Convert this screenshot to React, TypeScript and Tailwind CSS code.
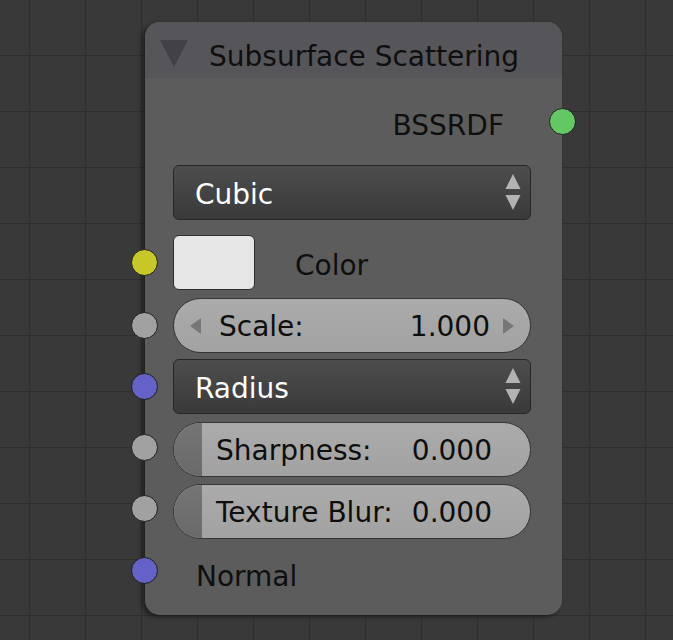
import React from "react"

const font = { fontFamily: '"DejaVu Sans", "Liberation Sans", sans-serif' }

const Socket = ({ color, className }: { color: string; className: string }) => (
  <div
    className={`absolute h-[27px] w-[27px] rounded-full border border-[#1e1e1e] ${color} ${className}`}
  />
)

const UpDown = () => (
  <svg width="16" height="37" viewBox="0 0 16 37" className="shrink-0">
    <polygon points="8,0 15.5,15 0.5,15" fill="#b3b3b3" />
    <polygon points="0.5,21 15.5,21 8,36" fill="#b3b3b3" />
  </svg>
)

const Dropdown = ({ label }: { label: string }) => (
  <div className="flex h-[55px] items-center justify-between rounded-[6px] border border-[#262626] bg-gradient-to-b from-[#4d4d4d] to-[#3a3a3a] pl-[21px] pr-[9px] text-white">
    <span className="pt-[5px]">{label}</span>
    <UpDown />
  </div>
)

const Slider = ({ label, value }: { label: string; value: string }) => (
  <div className="relative flex h-[55px] overflow-hidden rounded-full border border-[#353535] bg-gradient-to-b from-[#ababab] to-[#a2a2a2] text-[#0e0e0e]">
    <div className="w-[28px] shrink-0 bg-gradient-to-b from-[#757575] to-[#6a6a6a]" />
    <div className="flex flex-1 items-center justify-between pl-[14px] pr-[38px] pt-[3px]">
      <span>{label}</span>
      <span>{value}</span>
    </div>
  </div>
)

export default function App() {
  return (
    <div
      className="relative h-[640px] w-[673px] overflow-hidden bg-[#393939] bg-[linear-gradient(to_right,#2e2e2e_1px,transparent_1px),linear-gradient(to_bottom,#2e2e2e_1px,transparent_1px)] bg-[size:56px_56px] bg-[position:29px_55px]"
      style={font}
    >
      <div className="absolute left-[145px] top-[22px] w-[417px] text-[28px] leading-none">
        <div className="relative rounded-[15px] bg-[#5e5e5e]/95 shadow-[-3px_2px_4px_rgba(0,0,0,0.45)]">
          {/* header */}
          <div className="flex h-[56px] items-center gap-[21px] rounded-t-[15px] bg-[#56555a] pl-[15px] pt-[8px] text-[#0f0f0f]">
            <svg width="28" height="28" viewBox="0 0 28 28">
              <polygon points="0,0 28,0 14,27" fill="#424246" />
            </svg>
            <span className="pt-[5px]">Subsurface Scattering</span>
          </div>

          <div className="px-[28px] pb-[18px] pr-[31px]">
            {/* output */}
            <div className="relative mt-[27px] flex h-[40px] items-center justify-end pr-[27px] text-[#0f0f0f]">
              <span className="pt-[2px]">BSSRDF</span>
              <Socket color="bg-[#63c763]" className="right-[-45px] top-[3px]" />
            </div>

            <div className="mt-[20px]">
              <Dropdown label="Cubic" />
            </div>

            <div className="relative mt-[15px] flex h-[55px] items-center gap-[40px]">
              <Socket color="bg-[#c7c729]" className="left-[-42px] top-[14px]" />
              <div className="h-[55px] w-[82px] rounded-[6px] border border-[#2e2e2e] bg-[#e6e6e6]" />
              <span className="pt-[6px] text-[#0f0f0f]">Color</span>
            </div>

            <div className="relative mt-[8px]">
              <Socket color="bg-[#a1a1a1]" className="left-[-42px] top-[14px]" />
              <div className="flex h-[55px] items-center rounded-full border border-[#353535] bg-gradient-to-b from-[#ababab] to-[#a2a2a2] px-[16px] text-[#0e0e0e]">
                <svg width="11" height="16" viewBox="0 0 11 16" className="shrink-0">
                  <polygon points="11,0 11,16 0,8" fill="#777777" />
                </svg>
                <div className="flex flex-1 items-center justify-between pl-[18px] pr-[13px] pt-[3px]">
                  <span>Scale:</span>
                  <span>1.000</span>
                </div>
                <svg width="11" height="16" viewBox="0 0 11 16" className="shrink-0">
                  <polygon points="0,0 0,16 11,8" fill="#777777" />
                </svg>
              </div>
            </div>

            <div className="relative mt-[6px]">
              <Socket color="bg-[#6363c7]" className="left-[-42px] top-[14px]" />
              <Dropdown label="Radius" />
            </div>

            <div className="relative mt-[8px]">
              <Socket color="bg-[#a1a1a1]" className="left-[-42px] top-[12px]" />
              <Slider label="Sharpness:" value="0.000" />
            </div>

            <div className="relative mt-[7px]">
              <Socket color="bg-[#a1a1a1]" className="left-[-42px] top-[11px]" />
              <Slider label="Texture Blur:" value="0.000" />
            </div>

            <div className="relative mt-[18px] flex h-[40px] items-center pl-[23px] text-[#0f0f0f]">
              <Socket color="bg-[#6363c7]" className="left-[-42px] top-[0px]" />
              <span>Normal</span>
            </div>
          </div>
        </div>
      </div>
    </div>
  )
}
